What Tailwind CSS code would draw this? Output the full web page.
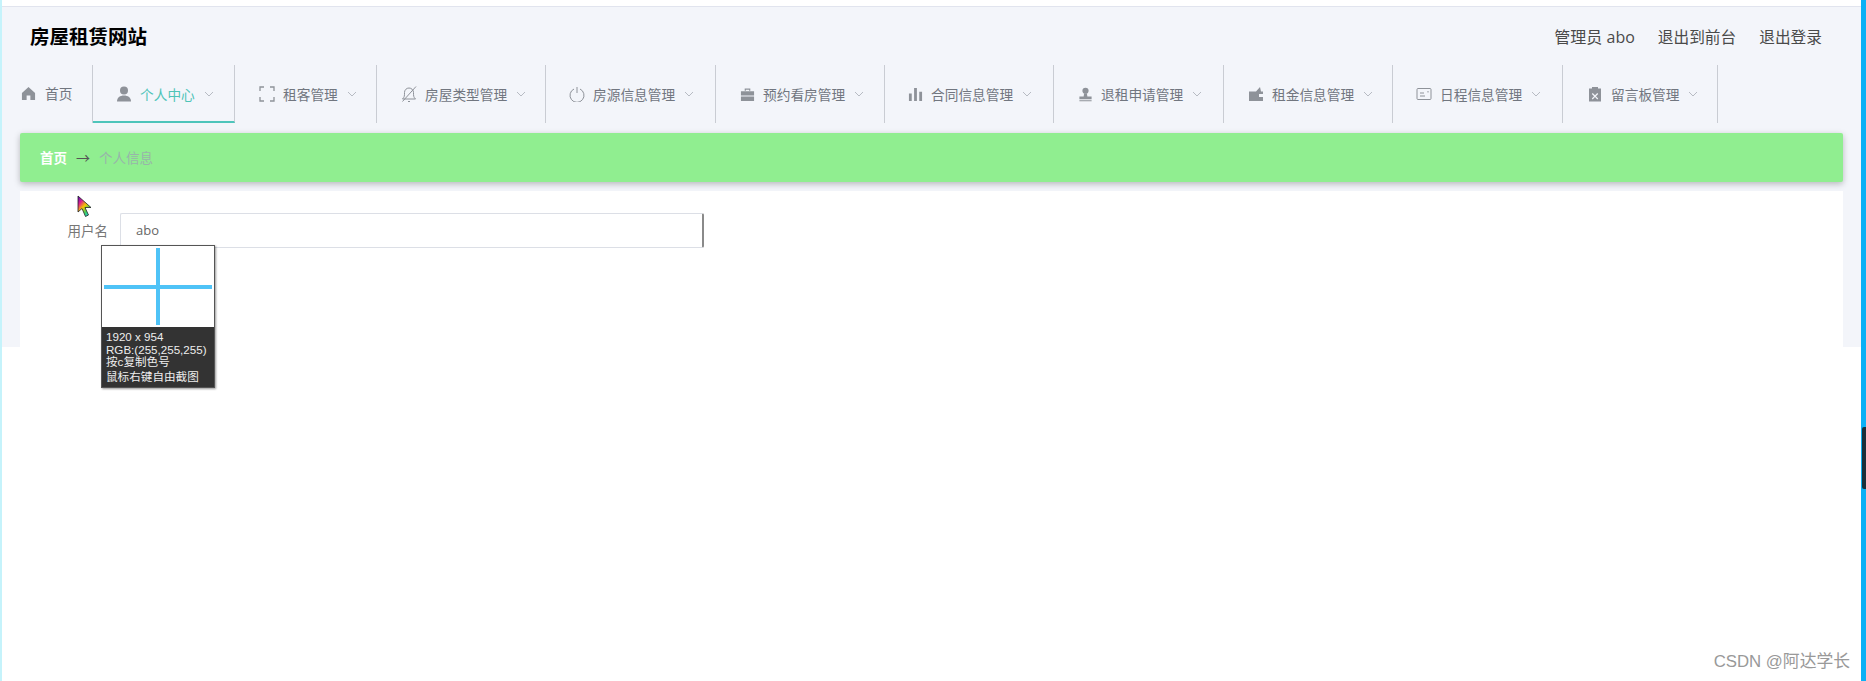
<!DOCTYPE html>
<html lang="zh-CN">
  <head>
    <meta charset="UTF-8" />
    <meta name="viewport" content="width=device-width, initial-scale=1.0" />
    <title>房屋租赁网站</title>
    <script src="https://cdn.jsdelivr.net/npm/@tailwindcss/browser@4"></script>
  </head>
  <body class="bg-white font-['Noto_Sans_CJK_SC','Noto_Sans',sans-serif]">
    <div class="relative h-[681px] w-full border-r-[5px] border-l-[2px] border-r-[#0bb0f5] border-l-[#c5f3fb] bg-white pt-[6px]">
      <div class="h-[341px] border-t border-[#e1e4ee] bg-[#f3f5fa]">
        <!-- header -->
        <div class="flex h-[58px] items-center justify-between pr-[39px] pl-[28px]">
          <h1 class="text-[19.5px] font-bold text-black">房屋租赁网站</h1>
          <div class="flex gap-[23px] pt-[2px] text-[15.7px] text-[#4a4a4a]">
            <a class="font-['Open_Sans','Noto_Sans_CJK_SC',sans-serif] text-[16px]">管理员 abo</a>
            <a>退出到前台</a>
            <a>退出登录</a>
          </div>
        </div>

        <!-- nav -->
        <nav class="flex h-[58px] text-[13.7px] text-[#71767f]">
          <a class="flex w-[91px] items-center gap-[9px] border-r border-[#c9ccd3] pb-[2px] pl-[19px]">
            <svg class="h-[15px] w-[15px]" viewBox="0 0 16 16" fill="#8e9299"><path d="M8 1 1 7.500V15h5v-5h4v5h5V7.500z" /></svg>
            首页
          </a>
          <a class="flex w-[142px] items-center gap-[8px] border-r border-b-2 border-r-[#c9ccd3] border-b-[#4ec5bb] pt-[2px] pl-[23px] text-[#4fc4b8]">
            <svg class="h-[16px] w-[16px]" viewBox="0 0 16 16" fill="#8e9299"><circle cx="8" cy="4.500" r="4" /><path d="M1 15.500c0-4 3-6 7-6s7 2 7 6z" /></svg>
            个人中心
            <svg class="ml-[1px] h-[10px] w-[10px]" viewBox="0 0 10 10" fill="none" stroke="#b7bbc3"><path d="m1 3 4 4 4-4" /></svg>
          </a>
          <a class="flex w-[142px] items-center gap-[8px] border-r border-[#c9ccd3] pl-[24px]">
            <svg class="h-[16px] w-[16px]" viewBox="0 0 16 16" fill="none" stroke="#8e9299" stroke-width="1.300"><path d="M1 5V1h4M11 1h4v4M15 11v4h-4M5 15H1v-4" /></svg>
            租客管理
            <svg class="ml-[1px] h-[10px] w-[10px]" viewBox="0 0 10 10" fill="none" stroke="#b7bbc3"><path d="m1 3 4 4 4-4" /></svg>
          </a>
          <a class="flex w-[169px] items-center gap-[8px] border-r border-[#c9ccd3] pl-[24px]">
            <svg class="h-[16px] w-[16px]" viewBox="0 0 16 16" fill="none" stroke="#8e9299"><path d="M1.500 13c2-2 2-3 2-6.500a4.500 4.500 0 0 1 9 0c0 3.500 0 4.500 2 6.500zM15 .5 1.500 15.500M7 15.500h2" /></svg>
            房屋类型管理
            <svg class="ml-[1px] h-[10px] w-[10px]" viewBox="0 0 10 10" fill="none" stroke="#b7bbc3"><path d="m1 3 4 4 4-4" /></svg>
          </a>
          <a class="flex w-[170px] items-center gap-[8px] border-r border-[#c9ccd3] pl-[23px]">
            <svg class="h-[16px] w-[16px]" viewBox="0 0 16 16" fill="none" stroke="#8e9299"><path d="M5 3a7 7 0 1 0 6 0M8 1v6" /></svg>
            房源信息管理
            <svg class="ml-[1px] h-[10px] w-[10px]" viewBox="0 0 10 10" fill="none" stroke="#b7bbc3"><path d="m1 3 4 4 4-4" /></svg>
          </a>
          <a class="flex w-[169px] items-center gap-[8px] border-r border-[#c9ccd3] pl-[24px]">
            <svg class="h-[15px] w-[15px]" viewBox="0 0 16 16" fill="#8e9299"><path d="M5 4V1.500h6V4H9.700V3H6.300v1zM1 4.500h14V9H1zM1 10h14v5H1z" /></svg>
            预约看房管理
            <svg class="ml-[1px] h-[10px] w-[10px]" viewBox="0 0 10 10" fill="none" stroke="#b7bbc3"><path d="m1 3 4 4 4-4" /></svg>
          </a>
          <a class="flex w-[169px] items-center gap-[8px] border-r border-[#c9ccd3] pl-[23px]">
            <svg class="h-[15px] w-[15px]" viewBox="0 0 16 16" fill="#8e9299"><path d="M1 7h3v8H1zM6.500 1h3v14h-3zM12 5h3v10h-3z" /></svg>
            合同信息管理
            <svg class="ml-[1px] h-[10px] w-[10px]" viewBox="0 0 10 10" fill="none" stroke="#b7bbc3"><path d="m1 3 4 4 4-4" /></svg>
          </a>
          <a class="flex w-[170px] items-center gap-[8px] border-r border-[#c9ccd3] pl-[24px]">
            <svg class="h-[15px] w-[15px]" viewBox="0 0 16 16" fill="#8e9299"><circle cx="8" cy="4" r="3.300" /><path d="M6.500 7h3l.5 3h4.500v3h-13v-3H6zM1.500 14h13v1.300h-13z" /></svg>
            退租申请管理
            <svg class="ml-[1px] h-[10px] w-[10px]" viewBox="0 0 10 10" fill="none" stroke="#b7bbc3"><path d="m1 3 4 4 4-4" /></svg>
          </a>
          <a class="flex w-[169px] items-center gap-[8px] border-r border-[#c9ccd3] pl-[24px]">
            <svg class="h-[16px] w-[16px]" viewBox="0 0 16 16" fill="#8e9299"><path fill-rule="evenodd" d="M1 5.500h7L12 1l1 4.500h2V8h-4v3h4v4H1z" /></svg>
            租金信息管理
            <svg class="ml-[1px] h-[10px] w-[10px]" viewBox="0 0 10 10" fill="none" stroke="#b7bbc3"><path d="m1 3 4 4 4-4" /></svg>
          </a>
          <a class="flex w-[170px] items-center gap-[8px] border-r border-[#c9ccd3] pl-[23px]">
            <svg class="h-[16px] w-[16px]" viewBox="0 0 16 16" fill="none" stroke="#8e9299"><rect x="1" y="2.500" width="14" height="11" rx="1" /><path d="M4 7h4M4 10h5M12 5v1.500" /></svg>
            日程信息管理
            <svg class="ml-[1px] h-[10px] w-[10px]" viewBox="0 0 10 10" fill="none" stroke="#b7bbc3"><path d="m1 3 4 4 4-4" /></svg>
          </a>
          <a class="flex w-[155px] items-center gap-[8px] border-r border-[#c9ccd3] pl-[24px]">
            <svg class="h-[16px] w-[16px]" viewBox="0 0 16 16" fill="#8e9299"><path fill-rule="evenodd" d="M2 2.500h3V1h6v1.500h3V15.500H2zM5.700 7l-.9.900L7.100 10.200l-2.300 2.300.9.900L8 11.100l2.300 2.300.9-.9-2.300-2.300 2.300-2.300-.9-.9L8 9.300z" /></svg>
            留言板管理
            <svg class="ml-[1px] h-[10px] w-[10px]" viewBox="0 0 10 10" fill="none" stroke="#b7bbc3"><path d="m1 3 4 4 4-4" /></svg>
          </a>
        </nav>

        <div class="px-[18px] pt-[10px]">
          <!-- breadcrumb -->
          <div class="flex h-[49px] items-center rounded-[2px] bg-[#90ee90] pl-[20px] text-[13.5px] shadow-[0_2px_6px_rgba(0,0,0,0.25)]">
            <span class="font-bold text-white">首页</span>
            <span class="mx-[9px] text-[14px] text-[#555]">→</span>
            <span class="text-[#98b4aa]">个人信息</span>
          </div>

          <!-- form -->
          <div class="mt-[9px] h-[156px] bg-white pt-[22px]">
            <div class="flex items-center">
              <label class="w-[100px] pr-[12px] text-right text-[13.5px] text-[#777]">用户名</label>
              <div class="flex h-[35px] w-[584px] items-center rounded-[2px] border border-r-2 border-[#dcdfe6] border-r-[#8a8a8a] pl-[15px] font-['Open_Sans',sans-serif] text-[13px] text-[#666]">abo</div>
            </div>
          </div>
        </div>
      </div>

      <!-- mouse cursor -->
      <svg class="absolute top-[195px] left-[75px] h-[23px] w-[16px]" viewBox="0 0 16 23">
        <defs>
          <linearGradient id="rainbow" x1="0" y1="0" x2="0.700" y2="1">
            <stop offset="0" stop-color="#4a00c0" />
            <stop offset="0.3" stop-color="#e0208a" />
            <stop offset="0.55" stop-color="#f5c400" />
            <stop offset="0.8" stop-color="#40d060" />
            <stop offset="1" stop-color="#20d0d0" />
          </linearGradient>
        </defs>
        <path d="M1 1v16l4-3.500 3.500 8 3-1.500-3.500-7.500h6z" fill="url(#rainbow)" stroke="#222" stroke-width="0.800" />
      </svg>

      <!-- screenshot tool magnifier -->
      <div class="absolute top-[245px] left-[99px] h-[143px] w-[114px] border border-[#555] shadow-[1px_1px_2px_rgba(0,0,0,0.4)]">
        <div class="relative h-[81px] bg-white">
          <div class="absolute top-[2px] left-[54px] h-[77px] w-[4px] bg-[#4fc3f7]"></div>
          <div class="absolute top-[39px] left-[2px] h-[4px] w-[108px] bg-[#4fc3f7]"></div>
        </div>
        <div class="h-[60px] bg-[#333] px-[4px] pt-[4px] font-['Liberation_Sans','Noto_Sans_CJK_SC',sans-serif] text-[11.6px] leading-[12.500px] text-[#eee]">
          <p>1920 x 954</p>
          <p>RGB:(255,255,255)</p>
          <p>按c复制色号</p>
          <p class="mt-[2px]">鼠标右键自由截图</p>
        </div>
      </div>

      <!-- scrollbar thumb -->
      <div class="absolute top-[427px] right-[-5px] h-[62px] w-[4px] rounded-l-[2px] bg-[#1a2f3a]"></div>

      <p class="absolute right-[11px] bottom-[7px] font-['Liberation_Sans','Noto_Sans_CJK_SC',sans-serif] text-[16.8px] text-[#999]">CSDN @阿达学长</p>
    </div>
  </body>
</html>
